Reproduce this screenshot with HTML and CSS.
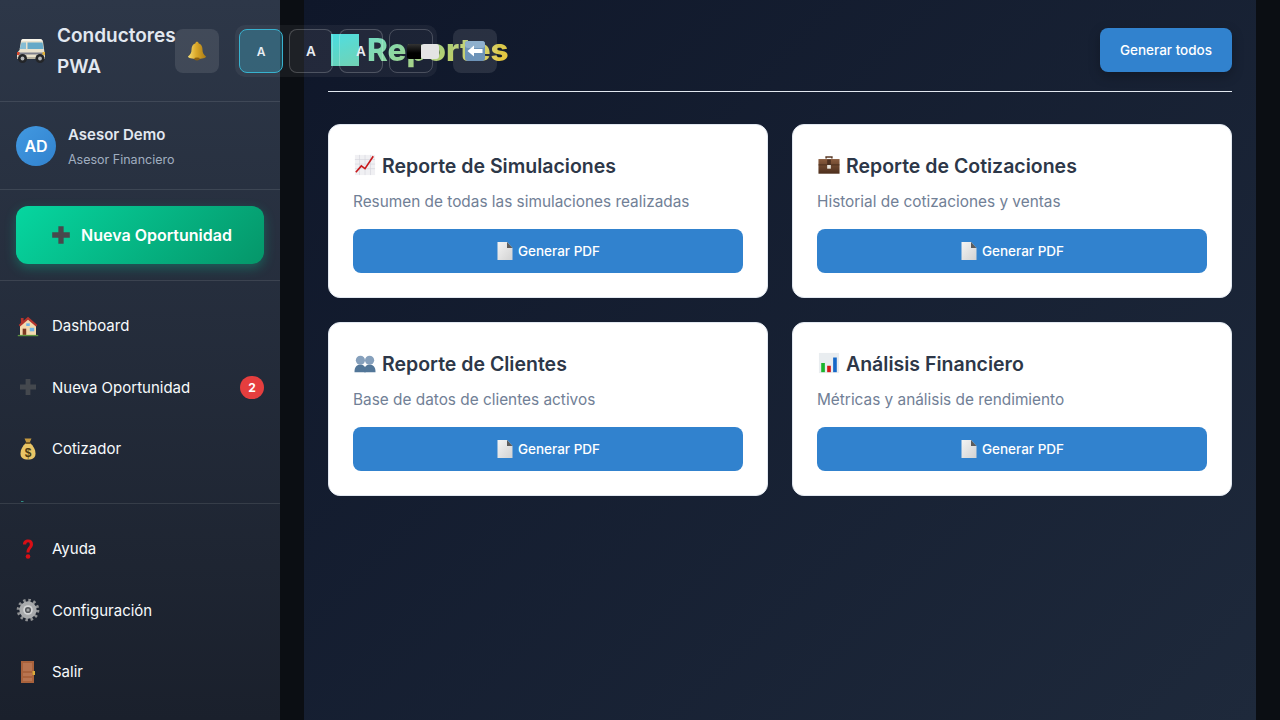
FILE: index.html
```html
<!DOCTYPE html>
<html lang="es">
<head>
<meta charset="utf-8">
<title>Reportes</title>
<link rel="stylesheet" href="styles.css">
</head>
<body>
<svg class="defs" aria-hidden="true">
  <defs>
    <linearGradient id="g-bell" x1="0" y1="0" x2="1" y2="0"><stop offset="0" stop-color="#f6dc72"/><stop offset=".45" stop-color="#dca92a"/><stop offset="1" stop-color="#a97a14"/></linearGradient>
    <linearGradient id="g-case" x1="0" y1="0" x2="0" y2="1"><stop offset="0" stop-color="#8a5c3e"/><stop offset="1" stop-color="#4c2e1c"/></linearGradient>
    <linearGradient id="g-page" x1="0" y1="0" x2="1" y2="1"><stop offset="0" stop-color="#f4f4f4"/><stop offset="1" stop-color="#d2d2d2"/></linearGradient>
  </defs>
  <symbol id="i-plus" viewBox="0 0 20 20"><path d="M7.600 2h4.800v5.600H18v4.800h-5.600V18H7.600v-5.600H2V7.600h5.600z" fill="currentColor"/></symbol>
  <symbol id="i-page" viewBox="2.500 1 15 18"><path d="M2.500 1h9.500l5.500 6v12h-15z" fill="url(#g-page)"/><path d="M12 1l5.500 6H12z" fill="#5c5c5c"/></symbol>
  <symbol id="i-house" viewBox="-1.500 -1.500 27 27"><path d="M12 3 21 11v11H3V11z" fill="#f3d9ae"/><path d="M12 1.500 22.500 11l-1.600 1.500L12 5 3.100 12.500 1.500 11 4 8.700V3h3v3z" fill="#b5342c"/><path d="M6 15h4v7H6z" fill="#7c3a22"/><path d="M14 14h5v4h-5z" fill="#6fb4e6"/><path d="M10 9h4v3h-4z" fill="#6fb4e6"/><path d="M.5 22h23v1.500H.5z" fill="#5d9440"/></symbol>
  <symbol id="i-gear" viewBox="-.5 -.5 25 25"><circle cx="12" cy="12" r="10" fill="none" stroke="#8f9193" stroke-width="3.600" stroke-dasharray="2.500 2.736"/><circle cx="12" cy="12" r="9" fill="#a9abad"/><circle cx="12" cy="12" r="5" fill="#d4d5d6"/><circle cx="12" cy="12" r="3.200" fill="#55585c"/><circle cx="12" cy="12" r="1.600" fill="#a3a5a7"/></symbol>
  <symbol id="i-door" viewBox="0 0 24 24"><path d="M5 1h13v22H5z" fill="#a9623c"/><path d="M7 3h9v8H7zM7 13h9v3H7zM7 18h9v3H7z" fill="#b87450"/><path d="M16.500 11H19v4h-2.500z" fill="#d9a93b"/></symbol>
  <symbol id="i-q" viewBox="0 0 24 24"><path d="M7 7.500C7 4 9 2.500 12.200 2.500S17 4.500 17 7.200c0 3.800-3.500 4.300-3.500 8.300h-3c0-5 3.300-5.500 3.300-8.300 0-1.200-.6-2-1.700-2-1.200 0-1.900 1-1.900 2.300z" fill="#d80f16"/><circle cx="12" cy="19.500" r="2.300" fill="#d80f16"/></symbol>
  <symbol id="i-chart" viewBox="0 0 24 24"><path d="M1 1h22v22H1z" fill="#f0f0f3"/><path d="M1 6h22M1 11h22M1 16h22M6 1v22M12 1v22M18 1v22" stroke="#d4d4dc" stroke-width=".7"/><path d="M2 20 8 13l4 3 9-13.500" fill="none" stroke="#c8191c" stroke-width="1.800"/></symbol>
  <symbol id="i-case" viewBox="0 0 24 24"><path d="M8 5V2.500h8V5h-1.700V4H9.700v1z" fill="#5a3a26"/><path d="M.5 5.500h23v16H.5z" fill="url(#g-case)"/><path d="M.5 11.500h23v.8H.5z" fill="#3f2717"/><path d="M10 6h4v6h-4z" fill="#4d3020"/><path d="M10 12h4v4h-4z" fill="#e9e6de"/></symbol>
  <symbol id="i-people" viewBox="0 0 24 24"><circle cx="7" cy="9" r="5" fill="#86a0bc"/><circle cx="17" cy="9" r="5" fill="#86a0bc"/><path d="M.5 22c0-6 3-8 6.500-8s6 2 6 8z" fill="#527698"/><path d="M11 22c0-6 2.500-8 6-8s6.500 2 6.500 8z" fill="#527698"/></symbol>
  <symbol id="i-bars" viewBox="0 0 24 24"><path d="M1 1h22v22H1z" fill="#e9edf0"/><path d="M3.500 12h4v10h-4z" fill="#1bb52d"/><path d="M10 15h4v7h-4z" fill="#d41818"/><path d="M16.500 6h4v16h-4z" fill="#1668c8"/></symbol>
  <symbol id="i-van" viewBox="0 0 30 26"><path d="M7 1h17q2.500 0 3 2.500L29 18v3H1v-6l2.500-3L5 3q.4-2 2-2z" fill="#e9e1cd"/><path d="M7 1h17q2 0 2.700 2H5.300Q5.800 1 7 1z" fill="#f8f5ea"/><path d="M5.500 4.500H10V11H3.700z" fill="#86bdd4"/><path d="M11.500 4.500h15l1 6.500h-16z" fill="#66a9c8"/><path d="M1 14.500h28v2H1z" fill="#7d7f8c"/><path d="M1 14h2.500v3H1z" fill="#d8492f"/><path d="M26.500 14H29v3h-2.500z" fill="#e0b23c"/><path d="M1 19h28v2H1z" fill="#b9b3a2"/><circle cx="6.500" cy="20.500" r="4.500" fill="#232528"/><circle cx="6.500" cy="20.500" r="1.900" fill="#b4b6b8"/><circle cx="24" cy="20.500" r="4.500" fill="#232528"/><circle cx="24" cy="20.500" r="1.900" fill="#b4b6b8"/></symbol>
  <symbol id="i-bell" viewBox="0 0 20 20"><path d="M10 .8c1 0 1.500.6 1.500 1.400C14.500 3 15.500 5.800 15.500 8.800c0 3 1 4.700 3.500 6.700 0 1.500-4 2.500-9 2.500s-9-1-9-2.500c2.500-2 3.500-3.700 3.500-6.700 0-3 1-5.800 4-6.600C8.500 1.400 9 .8 10 .8z" fill="url(#g-bell)"/><ellipse cx="10" cy="18" rx="2.800" ry="1.400" fill="#8a5f12"/></symbol>
  <symbol id="i-back" viewBox="1 1 20 20"><rect x="1" y="1" width="20" height="20" rx="3" fill="#6d93b8"/><rect x="1" y="1" width="20" height="7" rx="3" fill="#8fb0cd"/><path d="M3.500 11 10 5.500V9h8.500v4H10v3.500z" fill="#fff"/></symbol>
  <symbol id="i-tip" viewBox="0 0 24 18"><path d="M5 0h2.500v1H5z" fill="#2f8f86"/></symbol>
</svg>

<aside class="sidebar">
  <header class="brand">
    <svg class="brand-logo"><use href="#i-van"/></svg>
    <span class="brand-name">Conductores PWA</span>
  </header>
  <section class="user">
    <div class="avatar">AD</div>
    <div class="user-text">
      <div class="user-name">Asesor Demo</div>
      <div class="user-role">Asesor Financiero</div>
    </div>
  </section>
  <section class="cta-wrap">
    <button class="cta"><svg class="cta-icon"><use href="#i-plus"/></svg>Nueva Oportunidad</button>
  </section>
  <nav class="nav">
    <a class="nav-item"><svg class="nav-icon"><use href="#i-house"/></svg>Dashboard</a>
    <a class="nav-item"><svg class="nav-icon plus"><use href="#i-plus"/></svg>Nueva Oportunidad<span class="badge">2</span></a>
    <a class="nav-item"><svg class="nav-icon" viewBox="0 0 24 24"><path d="M8.500 1.500h7l-1.800 4h-3.400z" fill="#c69a3f"/><path d="M10 6h4c3.500 3 5.500 6.500 5.500 10.500 0 4-2.500 6-7.500 6s-7.500-2-7.500-6C4.500 12.500 6.500 9 10 6z" fill="#e9c566"/><path d="M9.500 5.500h5V7h-5z" fill="#7d5c1e"/><text x="12" y="20" class="bag-s">$</text></svg>Cotizador</a>
    <a class="nav-item"><svg class="nav-icon tip"><use href="#i-tip"/></svg></a>
  </nav>
  <nav class="nav-foot">
    <a class="nav-item"><svg class="nav-icon"><use href="#i-q"/></svg>Ayuda</a>
    <a class="nav-item"><svg class="nav-icon"><use href="#i-gear"/></svg>Configuración</a>
    <a class="nav-item"><svg class="nav-icon"><use href="#i-door"/></svg>Salir</a>
  </nav>
</aside>

<div class="toolbar">
  <button class="tool"><svg class="tool-icon"><use href="#i-bell"/></svg></button>
  <div class="tool-group">
    <button class="tool-a active">A</button>
    <button class="tool-a">A</button>
    <button class="tool-a">A</button>
    <button class="tool-a swatches"><span class="swatch-dark"></span><span class="swatch-light"></span></button>
  </div>
  <button class="tool"><svg class="tool-icon"><use href="#i-back"/></svg></button>
</div>

<div class="stage">
  <main class="main">
    <header class="page-head">
      <h1 class="page-title"><span class="title-glyph"></span>Reportes</h1>
      <button class="btn-all">Generar todos</button>
    </header>
    <section class="grid">
      <article class="card">
        <h2 class="card-title"><svg class="card-icon"><use href="#i-chart"/></svg>Reporte de Simulaciones</h2>
        <p class="card-desc">Resumen de todas las simulaciones realizadas</p>
        <button class="btn-pdf"><svg class="pdf-icon"><use href="#i-page"/></svg>Generar PDF</button>
      </article>
      <article class="card">
        <h2 class="card-title"><svg class="card-icon"><use href="#i-case"/></svg>Reporte de Cotizaciones</h2>
        <p class="card-desc">Historial de cotizaciones y ventas</p>
        <button class="btn-pdf"><svg class="pdf-icon"><use href="#i-page"/></svg>Generar PDF</button>
      </article>
      <article class="card">
        <h2 class="card-title"><svg class="card-icon"><use href="#i-people"/></svg>Reporte de Clientes</h2>
        <p class="card-desc">Base de datos de clientes activos</p>
        <button class="btn-pdf"><svg class="pdf-icon"><use href="#i-page"/></svg>Generar PDF</button>
      </article>
      <article class="card">
        <h2 class="card-title"><svg class="card-icon"><use href="#i-bars"/></svg>Análisis Financiero</h2>
        <p class="card-desc">Métricas y análisis de rendimiento</p>
        <button class="btn-pdf"><svg class="pdf-icon"><use href="#i-page"/></svg>Generar PDF</button>
      </article>
    </section>
  </main>
</div>
</body>
</html>
```
FILE: styles.css
```css
* { box-sizing: border-box; }
html, body { height: 100%; }
body {
  margin: 0;
  display: flex;
  height: 720px;
  overflow: hidden;
  background: #0b0e13;
  font-family: Inter, "Liberation Sans", sans-serif;
  position: relative;
}
button { font-family: inherit; border: 0; cursor: pointer; }
.defs { position: absolute; width: 0; height: 0; }
.bag-s { font: 700 12px "Liberation Sans", sans-serif; text-anchor: middle; fill: #4b3a12; }

.sidebar {
  width: 280px;
  flex: none;
  height: 720px;
  display: flex;
  flex-direction: column;
  background: linear-gradient(180deg, #2d3748 0%, #1a202c 100%);
  color: #fff;
}
.brand {
  height: 102px;
  flex: none;
  display: flex;
  align-items: center;
  gap: 11px;
  padding: 0 16px;
  border-bottom: 1px solid rgba(255, 255, 255, .1);
}
.brand-logo { width: 30px; height: 26px; flex: none; margin-top: 0; }
.brand-name { width: 119px; flex: none; font-size: 19px; font-weight: 600; line-height: 31px; color: #e2e8f0; }
.user {
  height: 88px;
  flex: none;
  display: flex;
  align-items: center;
  gap: 12px;
  padding: 0 16px;
  border-bottom: 1px solid rgba(255, 255, 255, .1);
}
.avatar {
  width: 40px; height: 40px; flex: none;
  border-radius: 50%;
  background: linear-gradient(135deg, #4299e1, #3182ce);
  display: flex; align-items: center; justify-content: center;
  font-size: 16px; font-weight: 600; color: #fff;
}
.user-text { padding-top: 2px; }
.user-name { font-size: 15px; font-weight: 600; line-height: 20px; color: #e2e8f0; }
.user-role { font-size: 12.500px; line-height: 16px; margin-top: 7px; color: #a0aec0; }
.cta-wrap {
  height: 91px;
  flex: none;
  padding: 16px;
  border-bottom: 1px solid rgba(255, 255, 255, .1);
}
.cta {
  width: 100%;
  height: 58px;
  padding: 0 0 0 2px;
  border-radius: 12px;
  background: linear-gradient(135deg, #06d6a0 0%, #059669 100%);
  box-shadow: 0 4px 12px rgba(6, 214, 160, .3);
  color: #fff;
  font-size: 16px;
  font-weight: 600;
  display: flex;
  align-items: center;
  justify-content: center;
  gap: 9px;
}
.cta-icon { width: 22px; height: 22px; color: #48484c; }
.nav {
  height: 223px;
  flex: none;
  overflow: hidden;
  padding: 14px 0 0;
  border-bottom: 1px solid rgba(255, 255, 255, .1);
}
.nav-foot { padding: 14px 0 0; flex: none; }
.nav-item {
  height: 61.500px;
  display: flex;
  align-items: center;
  gap: 12px;
  padding: 0 16px;
  font-size: 15px;
  font-weight: 400;
  color: #f7fafc;
}
.nav-icon { width: 24px; height: 24px; flex: none; }
.nav-icon.plus { width: 20px; height: 20px; margin: 0 2px; color: #44484e; }
.nav-icon.tip { height: 18px; }
.badge {
  margin-left: auto;
  width: 24px; height: 23px;
  border-radius: 12px;
  background: #e53e3e;
  display: flex; align-items: center; justify-content: center;
  font-size: 12px; font-weight: 700; color: #fff;
}

.toolbar {
  position: absolute;
  left: 175px;
  top: 25px;
  display: flex;
  align-items: center;
  gap: 16px;
  z-index: 5;
}
.tool {
  width: 44px; height: 44px;
  border-radius: 8px;
  background: rgba(255, 255, 255, .1);
  display: flex; align-items: center; justify-content: center;
  padding: 0;
}
.tool-icon { width: 20px; height: 20px; }
.tool-group {
  display: flex;
  gap: 6px;
  padding: 4px;
  border-radius: 10px;
  background: rgba(255, 255, 255, .05);
}
.tool-a {
  width: 44px; height: 44px;
  border-radius: 8px;
  border: 1px solid rgba(255, 255, 255, .2);
  background: rgba(255, 255, 255, .03);
  color: #e8edf3;
  font-size: 13.500px;
  font-weight: 600;
  display: flex; align-items: center; justify-content: center;
  padding: 0;
}
.tool-a.active { font-size: 12px; background: rgba(56, 178, 212, .3); border-color: #38b2cf; }
.tool-a.swatches { justify-content: flex-start; padding: 0 0 0 17px; background: transparent; }
.swatch-dark { width: 14px; height: 15px; flex: none; background: linear-gradient(180deg, #333, #000 60%); border-radius: 2px 0 0 2px; }
.swatch-light { width: 18px; height: 15px; flex: none; background: #e4e4e4; border-radius: 3px; }

.stage { flex: 1; min-width: 0; padding: 0 24px; height: 720px; }
.main {
  height: 720px;
  padding: 28px 24px;
  background: linear-gradient(135deg, #0f172a 0%, #1e293b 100%);
}
.page-head {
  display: flex;
  align-items: flex-start;
  justify-content: space-between;
  height: 64px;
  border-bottom: 1px solid #e2e8f0;
  margin-bottom: 32px;
}
.page-title {
  margin: 0;
  display: flex;
  align-items: center;
  height: 44px;
  font-size: 31.500px;
  font-weight: 800;
  line-height: 44px;
  color: transparent;
  background: linear-gradient(135deg, #3fdfe6 0%, #f4c430 100%);
  -webkit-background-clip: text;
  background-clip: text;
}
.title-glyph {
  width: 28px; height: 32px;
  margin: 0 8px 0 3px;
  background: linear-gradient(160deg, #3fdbe0, #66cfae);
}
.btn-all {
  width: 132px;
  height: 44px;
  border-radius: 8px;
  background: #3182ce;
  color: #fff;
  font-size: 13.500px;
  font-weight: 500;
  box-shadow: 0 4px 12px rgba(0, 0, 0, .25);
}
.grid {
  display: grid;
  grid-template-columns: 1fr 1fr;
  gap: 24px;
}
.card {
  background: #fff;
  border: 1px solid #e2e8f0;
  border-radius: 12px;
  padding: 24px;
}
.card-title {
  margin: 0 0 9px;
  padding-top: 2px;
  display: flex;
  align-items: center;
  gap: 6px;
  height: 32px;
  font-size: 19.500px;
  font-weight: 600;
  color: #2d3748;
}
.card-icon { width: 22px; height: 22px; flex: none; margin-left: 1px; margin-top: -2px; }
.card-desc {
  margin: 0 0 15px;
  font-size: 15.360px;
  line-height: 24px;
  color: #718096;
}
.btn-pdf {
  width: 100%;
  height: 44px;
  padding: 0 0 0 1px;
  border-radius: 8px;
  background: #3182ce;
  color: #fff;
  font-size: 13.500px;
  font-weight: 500;
  display: flex;
  align-items: center;
  justify-content: center;
  gap: 5px;
}
.pdf-icon { width: 16px; height: 18px; }
```
